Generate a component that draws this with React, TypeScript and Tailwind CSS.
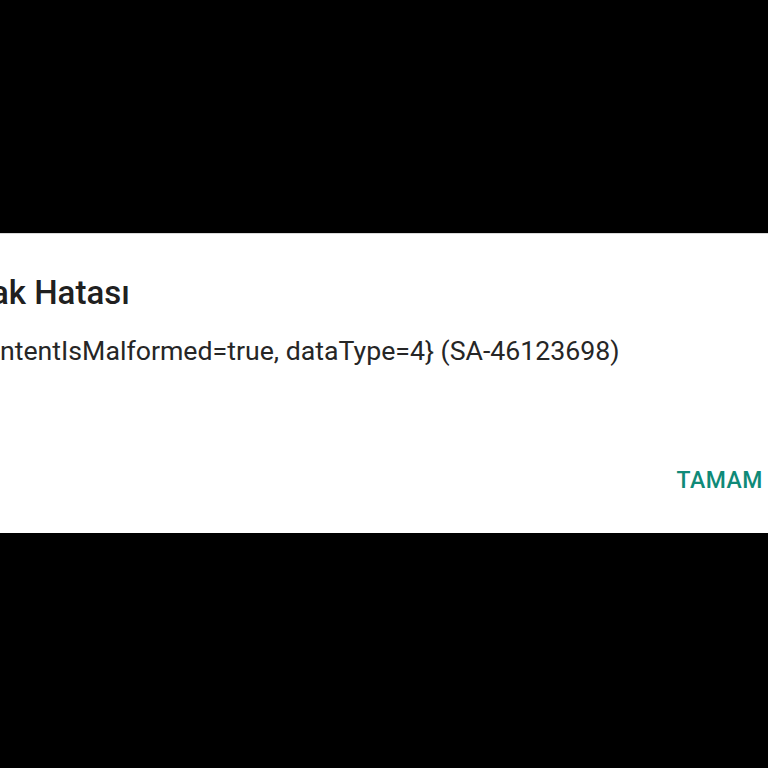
import React from 'react';

export default function App() {
    return (
        <div className="w-[768px] h-[768px] bg-black flex flex-col pt-[233px] overflow-hidden" style={{ fontFamily: 'Roboto, "Noto Sans", sans-serif' }}>
            {/* Dialog strip */}
            <div className="h-[300px] bg-white border-t border-[#d8d8d8] flex flex-col overflow-hidden">
                <div className="pt-[39px] -ml-[9px] text-[33px] leading-[40px] font-medium text-[#202020] whitespace-nowrap">
                    ak Hatası
                </div>
                <div className="mt-[21px] text-[26.7px] leading-[34px] text-[#262626] whitespace-nowrap">
                    {'ntentIsMalformed=true, dataType=4} (SA-46123698)'}
                </div>
                <div className="mt-[99px] flex justify-end pr-[5px]">
                    <span className="text-[23px] leading-[28px] font-medium text-[#0f8a78] tracking-[0.5px]">TAMAM</span>
                </div>
            </div>
        </div>
    );
}
